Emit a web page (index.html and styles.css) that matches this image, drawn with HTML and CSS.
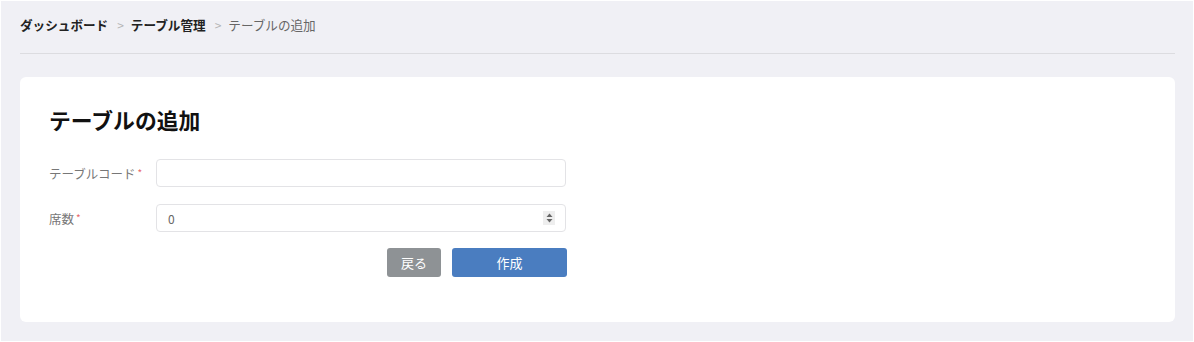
FILE: index.html
```html
<!DOCTYPE html>
<html lang="ja">
<head>
<meta charset="utf-8">
<link rel="stylesheet" href="styles.css">
</head>
<body>
<div class="page">
  <nav class="crumbs">
    <span class="crumb strong">ダッシュボード</span>
    <span class="sep">&gt;</span>
    <span class="crumb strong">テーブル管理</span>
    <span class="sep">&gt;</span>
    <span class="crumb current">テーブルの追加</span>
  </nav>
  <div class="rule"></div>
  <section class="card">
    <h1 class="title">テーブルの追加</h1>
    <div class="row">
      <label class="label">テーブルコード<span class="req">*</span></label>
      <div class="input"></div>
    </div>
    <div class="row">
      <label class="label">席数<span class="req">*</span></label>
      <div class="input number">
        <span class="value">0</span>
        <span class="spin">
          <svg width="7" height="10" viewBox="0 0 7 10"><path d="M3.5 0.5 L6.5 4 L0.5 4 Z" fill="#666"/><path d="M3.5 9.5 L6.5 6 L0.5 6 Z" fill="#666"/></svg>
        </span>
      </div>
    </div>
    <div class="actions">
      <button class="btn back">戻る</button>
      <button class="btn create">作成</button>
    </div>
  </section>
</div>
</body>
</html>
```

FILE: styles.css
```css
html, body {
  margin: 0;
  padding: 0;
  background: #ffffff;
}
body {
  font-family: "Noto Sans CJK JP", "Noto Sans", sans-serif;
  width: 1194px;
  height: 342px;
  overflow: hidden;
}
.page {
  margin: 1px 1px 0 1px;
  height: 340px;
  background: #f0f0f5;
  padding: 0 18px 0 19px;
  box-sizing: border-box;
}
.crumbs {
  display: flex;
  align-items: center;
  height: 47px;
  font-size: 12.6px;
  color: #222;
  box-sizing: border-box;
}
.crumb.strong {
  font-weight: 700;
}
.crumb.current {
  color: #666;
}
.sep {
  color: #b5b5b5;
  font-size: 12px;
  margin: 0 7px 0 9px;
}
.rule {
  height: 1px;
  background: #dcdce0;
  margin-top: 5px;
}
.card {
  margin-top: 23px;
  background: #fff;
  border-radius: 6px;
  height: 245px;
  padding: 27px 29px 0 29px;
  box-sizing: border-box;
}
.title {
  margin: 0 0 23px 0;
  font-size: 21.8px;
  font-weight: 700;
  color: #111;
  line-height: 32px;
}
.row {
  display: flex;
  align-items: center;
  margin-bottom: 17px;
}
.label {
  width: 107px;
  font-size: 12.5px;
  color: #777;
}
.req {
  color: #e86a6a;
  font-size: 10px;
  margin-left: 2px;
  vertical-align: 2px;
}
.input {
  width: 410px;
  height: 28px;
  border: 1px solid #e3e3e6;
  border-radius: 4px;
  box-sizing: border-box;
  background: #fff;
}
.input.number {
  display: flex;
  align-items: center;
  justify-content: space-between;
  padding: 0 10px 0 11px;
}
.value {
  font-size: 12px;
  color: #666;
}
.spin {
  width: 12px;
  height: 14px;
  background: #eee;
  display: flex;
  align-items: center;
  justify-content: center;
}
.actions {
  display: flex;
  justify-content: flex-start;
  padding-left: 338px;
  gap: 11px;
  margin-top: -1px;
}
.btn {
  border: none;
  border-radius: 3px;
  height: 29px;
  color: #fff;
  font-family: "Noto Sans CJK JP", "Noto Sans", sans-serif;
  font-size: 13px;
  padding: 0;
}
.btn.back {
  width: 54px;
  background: #8e9295;
}
.btn.create {
  width: 115px;
  background: #4a7dc0;
}
```
